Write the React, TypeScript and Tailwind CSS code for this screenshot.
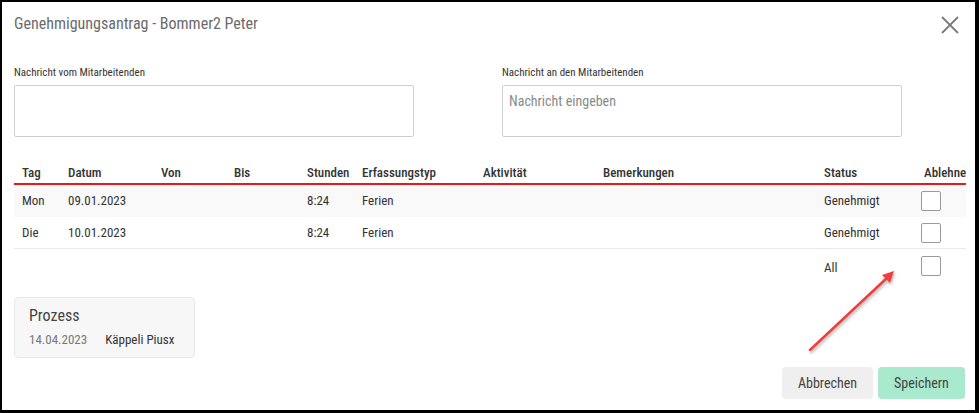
import React from 'react';

const font = { fontFamily: '"Roboto Condensed", "Liberation Sans Narrow", "DejaVu Sans Condensed", Roboto, sans-serif' };

const cols = [
  { label: 'Tag', w: 'w-[46px]' },
  { label: 'Datum', w: 'w-[93px]' },
  { label: 'Von', w: 'w-[73px]' },
  { label: 'Bis', w: 'w-[73px]' },
  { label: 'Stunden', w: 'w-[55px]' },
  { label: 'Erfassungstyp', w: 'w-[121px]' },
  { label: 'Aktivität', w: 'w-[120px]' },
  { label: 'Bemerkungen', w: 'w-[221px]' },
  { label: 'Status', w: 'w-[100px]' },
  { label: 'Ablehnen', w: 'w-[50px]' },
];

const rows = [
  ['Mon', '09.01.2023', '', '', '8:24', 'Ferien', '', '', 'Genehmigt'],
  ['Die', '10.01.2023', '', '', '8:24', 'Ferien', '', '', 'Genehmigt'],
];

function Checkbox() {
  return <div className="w-[20px] h-[20px] border border-[#9a9a9a] rounded-[2px] bg-white ml-[5px]" />;
}

export default function App() {
  return (
    <div className="w-[979px] h-[413px] bg-white border-black border-l-2 border-t-2 border-r-[4px] border-b-[3px] relative text-[#333]" style={font}>
      {/* Header */}
      <div className="flex items-center justify-between pl-[12px] pr-[12px] pt-[11px] h-[33px]">
        <div className="text-[16px] text-[#6b6b6b] leading-[20px]">Genehmigungsantrag - Bommer2 Peter</div>
        <svg width="20" height="20" viewBox="0 0 20 20" className="mr-[3px] mt-[2px]">
          <path d="M2 2 L18 18 M18 2 L2 18" stroke="#7a7a7a" strokeWidth="1.8" />
        </svg>
      </div>

      {/* Messages */}
      <div className="flex gap-[88px] px-[12px] mt-[31px]">
        <div className="w-[400px]">
          <div className="text-[11px] leading-[14px] mb-[5px]">Nachricht vom Mitarbeitenden</div>
          <div className="h-[52px] border border-[#cfcfcf] rounded-[2px]" />
        </div>
        <div className="w-[400px]">
          <div className="text-[11px] leading-[14px] mb-[5px]">Nachricht an den Mitarbeitenden</div>
          <div className="h-[52px] border border-[#cfcfcf] rounded-[2px] px-[6px] pt-[5px] text-[14px] text-[#8a8a8a]">Nachricht eingeben</div>
        </div>
      </div>

      {/* Table */}
      <div className="mx-[12px] mt-[25px] w-[952px] text-[13px]">
        <div className="flex h-[23px] items-center border-b-2 border-[#e31b1b] font-medium text-[13px]">
          {cols.map(c => (
            <div key={c.label} className={`${c.w} pl-[8px] whitespace-nowrap overflow-hidden`}>{c.label}</div>
          ))}
        </div>
        {rows.map((r, i) => (
          <div key={i} className={`flex h-[32px] items-center ${i === 0 ? 'bg-[#f9f9f9]' : 'bg-white border-b border-[#e9e9e9]'}`}>
            {cols.map((c, j) => (
              <div key={c.label} className={`${c.w} ${j === 9 ? '' : 'pl-[8px]'} whitespace-nowrap`}>
                {j === 9 ? <Checkbox /> : r[j]}
              </div>
            ))}
          </div>
        ))}
        <div className="flex h-[34px] items-center">
          <div className="w-[802px]" />
          <div className="w-[100px] pl-[8px] pt-[4px]">All</div>
          <div className="w-[50px]"><Checkbox /></div>
        </div>
      </div>

      {/* Prozess card */}
      <div className="ml-[12px] mt-[14px] w-[181px] h-[61px] bg-[#f7f7f7] border border-[#e9e9e9] rounded-[4px] px-[14px] pt-[8px]">
        <div className="text-[16px] leading-[20px] text-[#444]">Prozess</div>
        <div className="flex gap-[18px] text-[13px] mt-[4px]">
          <span className="text-[#777]">14.04.2023</span>
          <span className="text-[#333]">Käppeli Piusx</span>
        </div>
      </div>

      {/* Buttons */}
      <div className="flex justify-end gap-[5px] pr-[10px] mt-[9px]">
        <button className="w-[91px] h-[32px] bg-[#efefef] rounded-[4px] text-[14px] text-[#444]">Abbrechen</button>
        <button className="w-[87px] h-[32px] bg-[#a9e9cd] rounded-[4px] text-[14px] text-[#444]">Speichern</button>
      </div>

      {/* Annotation arrow */}
      <svg className="absolute left-0 top-0 pointer-events-none" width="979" height="413">
        <defs>
          <filter id="sh" x="-20%" y="-20%" width="140%" height="140%">
            <feDropShadow dx="1" dy="2" stdDeviation="1.5" floodColor="#000" floodOpacity="0.3" />
          </filter>
        </defs>
        <g filter="url(#sh)" transform="translate(-2,-2)">
          <line x1="810" y1="350" x2="888" y2="277" stroke="#f03c3c" strokeWidth="2.5" strokeLinecap="round" />
          <path d="M894 271 L882 275 L890 283 Z" fill="#f03c3c" />
        </g>
      </svg>
    </div>
  );
}
